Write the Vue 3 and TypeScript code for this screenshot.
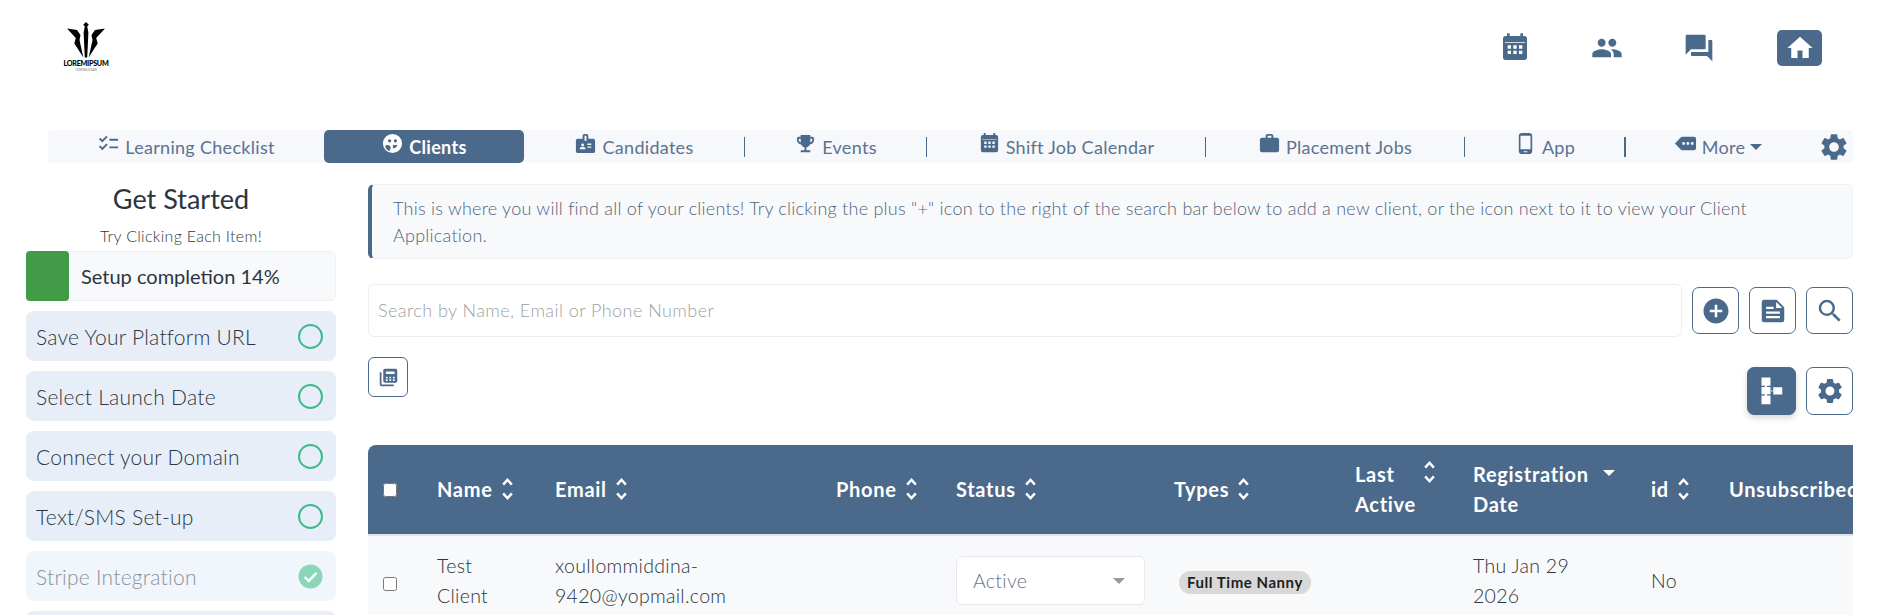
<script setup lang="ts">
interface NavItem {
  label: string
  icon: string
  active?: boolean
  sep?: boolean
  caret?: boolean
}

const icons: Record<string, string> = {
  checklist: 'M22 7h-9v2h9V7zm0 8h-9v2h9v-2zM5.54 11 2 7.46l1.41-1.41 2.12 2.12 4.24-4.24 1.41 1.41L5.54 11zm0 8L2 15.46l1.41-1.41 2.12 2.12 4.24-4.24 1.41 1.41L5.54 19z',
  face: 'M12 2a10 10 0 1 0 0 20 10 10 0 0 0 0-20zM9 7.5a1.75 1.75 0 1 1 0 3.5 1.75 1.75 0 0 1 0-3.5zm6 0a1.75 1.75 0 1 1 0 3.5 1.75 1.75 0 0 1 0-3.5zM7 13.5c2 0 3 1 3 2.5s-.5 3.2-1.5 4.2A8.5 8.5 0 0 1 4.2 15c.7-1 1.6-1.5 2.8-1.5zm5.5 0h4.6c-.4 2-2.2 3.500-4.200 3.500-.3 0-.500 0-.700-.1.300-1.100.300-2.300.300-3.400z',
  badge: 'M20 7h-5V4c0-1.100-.9-2-2-2h-2c-1.100 0-2 .9-2 2v3H4c-1.100 0-2 .9-2 2v11c0 1.100.9 2 2 2h16c1.100 0 2-.9 2-2V9c0-1.100-.9-2-2-2zM9 12a1.500 1.500 0 1 1 0 3 1.500 1.500 0 0 1 0-3zm3 6H6v-.750c0-1 2-1.500 3-1.500s3 .5 3 1.500V18zm1-9h-2V4h2v5zm5 7.500h-4V15h4v1.500zm0-3h-4V12h4v1.500z',
  trophy: 'M19 5h-2V3H7v2H5c-1.100 0-2 .9-2 2v1c0 2.550 1.920 4.630 4.390 4.940.63 1.500 1.980 2.630 3.610 2.960V19H7v2h10v-2h-4v-3.100c1.630-.33 2.980-1.460 3.610-2.960C19.080 12.630 21 10.550 21 8V7c0-1.100-.9-2-2-2zM5 8V7h2v3.820C5.840 10.400 5 9.300 5 8zm14 0c0 1.300-.84 2.400-2 2.820V7h2v1z',
  calendar: 'M6 1h2v2h8V1h2v2h1a2 2 0 0 1 2 2v14a2 2 0 0 1-2 2H5a2 2 0 0 1-2-2V5a2 2 0 0 1 2-2h1zM4.500 7.500v.6h15v-.6zM6.500 10v2.500H9V10zm4.250 0v2.500h2.500V10zM15 10v2.500h2.500V10zm-8.500 4v2.500H9V14zm4.250 0v2.500h2.500V14zM15 14v2.500h2.500V14z',
  work: 'M20 6h-4V4c0-1.110-.89-2-2-2h-4c-1.110 0-2 .89-2 2v2H4c-1.110 0-2 .89-2 2v11c0 1.110.89 2 2 2h16c1.110 0 2-.89 2-2V8c0-1.110-.89-2-2-2zm-6 0h-4V4h4v2z',
  phone: 'M16 1H8C6.340 1 5 2.340 5 4v16c0 1.660 1.340 3 3 3h8c1.660 0 3-1.340 3-3V4c0-1.660-1.340-3-3-3zm-2 20h-4v-1h4v1zm3.250-3H6.750V4h10.500v14z',
  more: 'M21 5H8.500c-.6 0-1.100.3-1.500.8L1 12l6 6.200c.4.5.9.8 1.500.8H21c1.100 0 2-.9 2-2V7c0-1.100-.9-2-2-2zM10 13.500a1.500 1.500 0 1 1 0-3 1.500 1.500 0 0 1 0 3zm4.500 0a1.500 1.500 0 1 1 0-3 1.500 1.500 0 0 1 0 3zm4.500 0a1.500 1.500 0 1 1 0-3 1.500 1.500 0 0 1 0 3z',
  gear: 'M19.140 12.940c.04-.3.06-.61.06-.94 0-.32-.02-.64-.07-.94l2.030-1.580a.49.49 0 0 0 .12-.61l-1.920-3.320a.488.488 0 0 0-.59-.22l-2.390.96c-.5-.38-1.030-.7-1.620-.94l-.36-2.540a.484.484 0 0 0-.48-.41h-3.840c-.24 0-.43.17-.47.41l-.36 2.540c-.59.24-1.130.57-1.620.94l-2.390-.96c-.22-.08-.47 0-.59.22L2.740 8.870c-.12.21-.08.47.12.61l2.030 1.580c-.05.3-.09.63-.09.94s.02.64.07.94l-2.030 1.580a.49.49 0 0 0-.12.61l1.920 3.320c.12.22.37.29.59.22l2.390-.96c.5.38 1.030.7 1.620.94l.36 2.540c.05.24.24.41.48.41h3.840c.24 0 .44-.17.47-.41l.36-2.540c.59-.24 1.130-.56 1.620-.94l2.390.96c.22.08.47 0 .59-.22l1.920-3.320c.12-.22.07-.47-.12-.61l-2.010-1.580zM12 15.600c-1.980 0-3.600-1.620-3.600-3.600s1.620-3.600 3.600-3.600 3.600 1.620 3.600 3.600-1.620 3.600-3.600 3.600z',
  people: 'M16 11c1.660 0 2.990-1.340 2.990-3S17.660 5 16 5s-3 1.340-3 3 1.340 3 3 3zm-8 0c1.660 0 2.990-1.340 2.990-3S9.660 5 8 5 5 6.340 5 8s1.340 3 3 3zm0 2c-2.330 0-7 1.170-7 3.500V19h14v-2.500c0-2.330-4.670-3.500-7-3.500zm8 0c-.29 0-.62.02-.97.05 1.160.84 1.970 1.970 1.970 3.450V19h6v-2.500c0-2.330-4.670-3.500-7-3.500z',
  forum: 'M21 6h-2v9H6v2c0 .55.45 1 1 1h11l4 4V7c0-.55-.45-1-1-1zm-4 6V3c0-.55-.45-1-1-1H3c-.55 0-1 .45-1 1v14l4-4h10c.55 0 1-.45 1-1z',
  home: 'M10 20v-6h4v6h5v-8h3L12 3 2 12h3v8z',
  plus: 'M12 2C6.480 2 2 6.480 2 12s4.480 10 10 10 10-4.480 10-10S17.520 2 12 2zm5 11h-4v4h-2v-4H7v-2h4V7h2v4h4v2z',
  file: 'M5 3h10l6 6v10a2 2 0 0 1-2 2H5a2 2 0 0 1-2-2V5a2 2 0 0 1 2-2zM14.500 4.700V9.500h4.800zM6.500 8.500v1.800h6V8.500zm0 3.800v1.800h11v-1.800zm0 3.700v1.800h11V16z',
  search: 'M15.500 14h-.79l-.28-.27A6.471 6.471 0 0 0 16 9.500 6.500 6.500 0 1 0 9.500 16c1.610 0 3.090-.59 4.230-1.570l.27.28v.79l5 4.990L20.490 19l-4.990-5zm-6 0C7.010 14 5 11.990 5 9.500S7.010 5 9.500 5 14 7.010 14 9.500 11.990 14 9.500 14z',
  calc: 'M4 6H2v14c0 1.100.9 2 2 2h14v-2H4V6zm16-4H8c-1.100 0-2 .9-2 2v12c0 1.100.9 2 2 2h12c1.100 0 2-.9 2-2V4c0-1.100-.9-2-2-2zM9 5h10v3H9V5zm2 11H9v-2h2v2zm0-3H9v-2h2v2zm4 3h-2v-2h2v2zm0-3h-2v-2h2v2zm4 3h-2v-2h2v2zm0-3h-2v-2h2v2z',
  tree: 'M3.600 1.200h7.200v6.600H8v1h2.800v5.800H8v1h2.800v7H3.600v-7h2.800v-1H3.600V8.800h2.800v-1H3.600zM11.400 11.400h1v1h-1zM13 9h7.200v5.800H13z'
}

const navItems: NavItem[] = [
  { label: 'Learning Checklist', icon: 'checklist' },
  { label: 'Clients', icon: 'face', active: true },
  { label: 'Candidates', icon: 'badge', sep: true },
  { label: 'Events', icon: 'trophy', sep: true },
  { label: 'Shift Job Calendar', icon: 'calendar', sep: true },
  { label: 'Placement Jobs', icon: 'work', sep: true },
  { label: 'App', icon: 'phone', sep: true },
  { label: 'More', icon: 'more', caret: true }
]

const steps = [
  { label: 'Save Your Platform URL', done: false },
  { label: 'Select Launch Date', done: false },
  { label: 'Connect your Domain', done: false },
  { label: 'Text/SMS Set-up', done: false },
  { label: 'Stripe Integration', done: true }
]

const columns = [
  { label: 'Name' },
  { label: 'Email' },
  { label: 'Phone' },
  { label: 'Status' },
  { label: 'Types' },
  { label: 'Last Active', split: true },
  { label: 'Registration Date', active: true },
  { label: 'id' },
  { label: 'Unsubscribed' }
]
</script>

<template>
  <div class="page">
    <header class="topbar">
      <div class="logo">
        <svg width="38" height="36" viewBox="0 0 38 36">
          <path d="M19 0l2.800 2.800-1.600 1.800 1.200 6-1.200 25h-2.400l-1.200-25 1.200-6-1.600-1.800z" />
          <path d="M0 6.500l10 1.500 3.500 5-1 5 3.800 17.500-6-9.500-3-4.500 1.500-5.500z" />
          <path d="M38 6.500l-10 1.500-3.500 5 1 5-3.800 17.500 6-9.500 3-4.500-1.500-5.500z" />
        </svg>
        <span class="logo-name">LOREMIPSUM</span>
        <span class="logo-sub">TOWNSLOGAN</span>
      </div>
      <div class="top-icons">
        <svg class="top-icon" viewBox="0 0 24 24"><path :d="icons.calendar" /></svg>
        <svg class="top-icon" viewBox="0 0 24 24"><path :d="icons.people" /></svg>
        <svg class="top-icon" viewBox="0 0 24 24"><path :d="icons.forum" /></svg>
        <button class="home-btn">
          <svg viewBox="0 0 24 24"><path :d="icons.home" /></svg>
        </button>
      </div>
    </header>

    <nav class="nav">
      <div
        v-for="item in navItems"
        :key="item.label"
        class="nav-cell"
      >
        <div :class="['nav-item', { active: item.active, sep: item.sep }]">
          <svg viewBox="0 0 24 24"><path :d="icons[item.icon]" /></svg>
          <span>{{ item.label }}</span>
          <i v-if="item.caret" class="caret"></i>
        </div>
      </div>
      <div class="nav-cell nav-gear">
        <svg viewBox="0 0 24 24"><path :d="icons.gear" /></svg>
      </div>
    </nav>

    <div class="content">
      <aside class="sidebar">
        <h2>Get Started</h2>
        <p>Try Clicking Each Item!</p>
        <div class="progress">
          <div class="progress-fill" :style="{ width: '14%' }"></div>
          <span>Setup completion 14%</span>
        </div>
        <div
          v-for="step in steps"
          :key="step.label"
          :class="['step', { done: step.done }]"
        >
          <span>{{ step.label }}</span>
          <svg v-if="step.done" class="check" viewBox="0 0 26 26">
            <circle cx="13" cy="13" r="12.500" />
            <path d="M7 13.500l4.200 4.200 8-8.500" />
          </svg>
          <i v-else class="ring"></i>
        </div>
        <div class="step"></div>
      </aside>

      <main class="main">
        <div class="info">
          This is where you will find all of your clients! Try clicking the plus "+" icon to the right of the search bar below to add a new client, or the icon next to it to view your Client Application.
        </div>

        <div class="search-row">
          <div class="search-input">Search by Name, Email or Phone Number</div>
          <button class="icon-btn"><svg viewBox="0 0 24 24"><path :d="icons.plus" /></svg></button>
          <button class="icon-btn"><svg viewBox="0 0 24 24"><path :d="icons.file" /></svg></button>
          <button class="icon-btn"><svg viewBox="0 0 24 24"><path :d="icons.search" /></svg></button>
        </div>

        <div class="tools-row">
          <button class="calc-btn"><svg viewBox="0 0 24 24"><path :d="icons.calc" /></svg></button>
          <div class="tools-right">
            <button class="icon-btn solid"><svg viewBox="0 0 24 24"><path :d="icons.tree" /></svg></button>
            <button class="icon-btn"><svg viewBox="0 0 24 24"><path :d="icons.gear" /></svg></button>
          </div>
        </div>

        <div class="table-wrap">
          <table>
            <colgroup>
              <col style="width: 57px" />
              <col style="width: 118px" />
              <col style="width: 281px" />
              <col style="width: 120px" />
              <col style="width: 218px" />
              <col style="width: 181px" />
              <col style="width: 118px" />
              <col style="width: 178px" />
              <col style="width: 78px" />
              <col style="width: 170px" />
            </colgroup>
            <thead>
              <tr>
                <th><input type="checkbox" class="cb head" /></th>
                <th v-for="col in columns" :key="col.label">
                  <div :class="['th-inner', { split: col.split, reg: col.active }]">
                    <span class="th-label">{{ col.label }}</span>
                    <i v-if="col.active" class="caret white"></i>
                    <svg v-else-if="col.label !== 'Unsubscribed'" class="sort" viewBox="0 0 12 24">
                      <path d="M2 8l4-4.500L10 8M2 16l4 4.500 4-4.500" />
                    </svg>
                  </div>
                </th>
              </tr>
            </thead>
            <tbody>
              <tr>
                <td><input type="checkbox" class="cb" /></td>
                <td>Test<br />Client</td>
                <td>xoullommiddina-<br />9420@yopmail.com</td>
                <td></td>
                <td>
                  <div class="select">
                    <span>Active</span>
                    <i class="caret grey"></i>
                  </div>
                </td>
                <td><span class="pill">Full Time Nanny</span></td>
                <td></td>
                <td>Thu Jan 29<br />2026</td>
                <td>No</td>
                <td></td>
              </tr>
            </tbody>
          </table>
        </div>
      </main>
    </div>
  </div>
</template>

<style>
html,
body {
  margin: 0;
  height: 615px;
  overflow: hidden;
  background: #fff;
}
</style>

<style scoped>
.page {
  font-family: Lato, "Open Sans", sans-serif;
  color: #2f3a45;
  height: 615px;
  overflow: hidden;
}

svg {
  fill: currentColor;
  fill-rule: evenodd;
  display: block;
}

button {
  font: inherit;
  cursor: pointer;
}

/* Top bar */
.topbar {
  height: 130px;
  box-sizing: border-box;
  display: flex;
  justify-content: space-between;
  align-items: flex-start;
  padding: 22px 61px 0 67px;
  color: #4b698b;
}

.logo {
  width: 38px;
  color: #000;
  display: flex;
  flex-direction: column;
  align-items: center;
}

.logo svg {
  fill: #000;
}

.logo-name {
  font-size: 7.200px;
  line-height: 8px;
  margin-top: 2px;
  font-weight: 900;
  letter-spacing: -0.3px;
  white-space: nowrap;
}

.logo-sub {
  font-size: 3px;
  line-height: 4px;
  color: #777;
  white-space: nowrap;
}

.top-icons {
  display: flex;
  align-items: center;
  gap: 60px;
  padding-top: 8px;
}

.top-icon {
  width: 32px;
  height: 32px;
}

.home-btn {
  width: 45px;
  height: 36px;
  border: 0;
  border-radius: 5px;
  background: #4b698b;
  color: #fff;
  display: flex;
  align-items: center;
  justify-content: center;
  padding: 0;
  margin-left: 2px;
}

.home-btn svg {
  width: 30px;
  height: 30px;
}

/* Nav */
.nav {
  margin: 0 30px 0 48px;
  height: 33px;
  background: #f6f8fb;
  border-radius: 4px;
  display: grid;
  grid-template-columns: 276px 200px 221px 182px 279px 259px 161px 184px 43px;
  color: #5b7390;
}

.nav-cell {
  display: flex;
  align-items: center;
}

.nav-item {
  flex: 1;
  height: 20px;
  display: flex;
  align-items: center;
  justify-content: center;
  gap: 5px;
  font-size: 18px;
  letter-spacing: 0.3px;
  box-sizing: border-box;
}

.nav-item svg {
  width: 23px;
  height: 23px;
  color: #4b698b;
  margin-top: -6px;
}

.nav-item.sep {
  border-right: 1.500px solid #4b698b;
}

.nav-cell:nth-child(7) .nav-item {
  border-right-width: 2px;
}

.nav-item.active {
  height: 33px;
  background: #4b698b;
  color: #fff;
  font-weight: 700;
  border-radius: 5px;
}

.nav-item.active svg {
  color: #fff;
}

.caret {
  display: inline-block;
  width: 0;
  height: 0;
  border-left: 6.500px solid transparent;
  border-right: 6.500px solid transparent;
  border-top: 6.500px solid #4b698b;
}

.caret.white {
  border-top-color: #fff;
  margin-top: -2px;
}

.caret.grey {
  border-top-color: #9a9a9a;
}

.nav-gear {
  justify-content: center;
  color: #4b698b;
  padding-left: 4px;
}

.nav-gear svg {
  width: 32px;
  height: 32px;
}

/* Content */
.content {
  display: grid;
  grid-template-columns: 310px 1485px;
  column-gap: 32px;
  padding-left: 26px;
  padding-top: 21px;
}

.sidebar {
  display: flex;
  flex-direction: column;
  gap: 10px;
}

.sidebar h2 {
  margin: 0;
  font-size: 27px;
  font-weight: 400;
  line-height: 30px;
  text-align: center;
  color: #2b3440;
}

.sidebar p {
  margin: 2px 0 -5px;
  font-size: 16px;
  letter-spacing: 0.3px;
  line-height: 20px;
  font-weight: 300;
  text-align: center;
  color: #2f3840;
}

.progress {
  position: relative;
  height: 50px;
  box-sizing: border-box;
  background: #f8f9fb;
  border: 1px solid #eef0f3;
  border-radius: 6px;
  display: flex;
  align-items: center;
  font-size: 20px;
  color: #2b3440;
}

.progress-fill {
  position: absolute;
  left: -1px;
  top: -1px;
  bottom: -1px;
  background: #429b46;
  border-radius: 4px;
}

.progress span {
  position: relative;
  margin-left: 54px;
}

.step {
  flex: none;
  height: 50px;
  box-sizing: border-box;
  background: #e8eef8;
  border-radius: 8px;
  padding: 0 13px 0 10px;
  display: flex;
  align-items: center;
  justify-content: space-between;
  font-size: 21px;
  letter-spacing: 0.25px;
  font-weight: 300;
  color: #2b3642;
}

.step.done {
  background: #f1f5fc;
  color: #8b939b;
}

.ring {
  width: 25px;
  height: 25px;
  box-sizing: border-box;
  border: 2.500px solid #3dbb8a;
  border-radius: 50%;
}

.check {
  width: 25px;
  height: 25px;
}

.check circle {
  fill: #8cd6b8;
}

.check path {
  fill: none;
  stroke: #fff;
  stroke-width: 2.500;
}

/* Main */
.main {
  min-width: 0;
}

.info {
  height: 75px;
  box-sizing: border-box;
  background: #f8f9fb;
  border: 1px solid #eceff3;
  border-left: 4px solid #4b698b;
  border-radius: 6px;
  padding: 10px 60px 0 21px;
  font-size: 18px;
  letter-spacing: 0.25px;
  line-height: 27px;
  font-weight: 300;
  color: #4f647b;
}

.search-row {
  margin-top: 25px;
  display: flex;
  align-items: center;
  gap: 10px;
}

.search-input {
  flex: 1;
  height: 53px;
  box-sizing: border-box;
  border: 1.500px solid #eceef0;
  border-radius: 6px;
  padding: 0 0 2px 9px;
  display: flex;
  align-items: center;
  font-size: 18px;
  letter-spacing: 0.45px;
  font-weight: 300;
  color: #9a9fa4;
}

.icon-btn {
  width: 47px;
  height: 47px;
  padding: 0;
  flex: none;
  background: #fff;
  border: 1.500px solid #4b698b;
  border-radius: 7px;
  color: #4b698b;
  display: flex;
  align-items: center;
  justify-content: center;
}

.icon-btn svg {
  width: 30px;
  height: 30px;
}

.icon-btn.solid {
  width: 49px;
  height: 48px;
  background: #4b698b;
  color: #fff;
  box-shadow: 0 3px 6px rgba(0, 0, 0, 0.16);
}

.tools-row {
  display: flex;
  justify-content: space-between;
  align-items: flex-start;
  margin-top: 20px;
  height: 88px;
}

.tools-right {
  display: flex;
  gap: 10px;
  margin-top: 10px;
}

.tools-right .icon-btn {
  height: 48px;
}

.calc-btn {
  width: 40px;
  height: 40px;
  padding: 0;
  background: #fff;
  border: 1.500px solid #4b698b;
  border-radius: 6px;
  color: #4b698b;
  display: flex;
  align-items: center;
  justify-content: center;
}

.calc-btn svg {
  width: 21px;
  height: 21px;
}

/* Table */
.table-wrap {
  overflow: hidden;
  border-radius: 8px 0 0 0;
}

table {
  width: 1519px;
  table-layout: fixed;
  border-collapse: collapse;
}

thead tr {
  background: #4b698b;
  color: #fff;
  height: 90px;
  border-bottom: 2px solid #dfe3ea;
}

th {
  padding: 0 12px 2px;
  text-align: left;
  font-size: 20px;
  letter-spacing: 0.7px;
  font-weight: 700;
  line-height: 30px;
  overflow: hidden;
  white-space: nowrap;
}

th:first-child,
td:first-child {
  padding: 0 0 0 15px;
}

.th-inner {
  display: flex;
  align-items: center;
  gap: 8px;
}

.th-inner.split .th-label,
.th-inner.reg .th-label {
  white-space: normal;
  width: 60px;
}

.th-inner.reg .th-label {
  width: 122px;
}

.th-inner.split {
  align-items: flex-start;
}

.th-inner.reg {
  align-items: flex-start;
}

.th-inner.reg .caret {
  margin-top: 11px;
}

.sort {
  flex: none;
  width: 13px;
  height: 26px;
  fill: none;
  stroke: #fff;
  stroke-width: 2.300;
}

tbody tr {
  background: #f8f9fb;
  height: 90px;
}

td {
  padding: 0 12px;
  font-size: 19.500px;
  letter-spacing: 0.3px;
  font-weight: 300;
  line-height: 30px;
  color: #2b3440;
  vertical-align: middle;
}

.cb {
  display: block;
  width: 14px;
  height: 14px;
  margin: 0;
}

td .cb {
  margin-top: 6px;
}

.select {
  width: 189px;
  height: 49px;
  box-sizing: border-box;
  background: #fff;
  border: 1px solid #e6e8eb;
  border-radius: 6px;
  display: flex;
  align-items: center;
  justify-content: space-between;
  padding: 0 19px 0 16px;
  color: #6a7480;
}

.pill {
  display: inline-block;
  margin-left: 5px;
  padding: 0 8px;
  background: #d8d8d8;
  border-radius: 12px;
  font-size: 15px;
  letter-spacing: 0.55px;
  line-height: 23px;
  font-weight: 700;
  color: #222;
  white-space: nowrap;
}
</style>
